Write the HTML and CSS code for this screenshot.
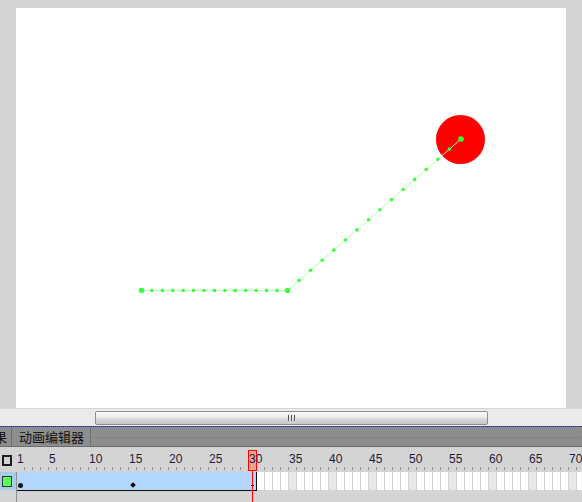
FILE: index.html
```html
<!DOCTYPE html>
<html lang="zh">
<head>
<meta charset="utf-8">
<title>动画编辑器</title>
<link rel="stylesheet" href="styles.css">
</head>
<body>
<div class="app">
  <div class="workspace">
    <div class="stage">
      <svg class="stage-svg" width="550" height="400" viewBox="16 8 550 400" xmlns="http://www.w3.org/2000/svg">
        <circle cx="460.5" cy="139.5" r="24.5" fill="#ff0000"/>
        <polyline points="141.5,290.5 287.5,290.5 461,139" fill="none" stroke="#b3ffb3" stroke-width="1"/>
        <g fill="#3cff3c">
          <circle cx="141.5" cy="290.5" r="2.8"/>
          <circle cx="151.9" cy="290.5" r="1.8"/>
          <circle cx="162.4" cy="290.5" r="1.8"/>
          <circle cx="172.8" cy="290.5" r="1.8"/>
          <circle cx="183.2" cy="290.5" r="1.8"/>
          <circle cx="193.6" cy="290.5" r="1.8"/>
          <circle cx="204.1" cy="290.5" r="1.8"/>
          <circle cx="214.5" cy="290.5" r="1.8"/>
          <circle cx="224.9" cy="290.5" r="1.8"/>
          <circle cx="235.4" cy="290.5" r="1.8"/>
          <circle cx="245.8" cy="290.5" r="1.8"/>
          <circle cx="256.2" cy="290.5" r="1.8"/>
          <circle cx="266.6" cy="290.5" r="1.8"/>
          <circle cx="277.1" cy="290.5" r="1.8"/>
          <circle cx="287.5" cy="290.5" r="2.8"/>
          <circle cx="299.1" cy="280.4" r="1.8"/>
          <circle cx="310.6" cy="270.3" r="1.8"/>
          <circle cx="322.2" cy="260.2" r="1.8"/>
          <circle cx="333.8" cy="250.1" r="1.8"/>
          <circle cx="345.3" cy="240.0" r="1.8"/>
          <circle cx="356.9" cy="229.9" r="1.8"/>
          <circle cx="368.5" cy="219.8" r="1.8"/>
          <circle cx="380.0" cy="209.7" r="1.8"/>
          <circle cx="391.6" cy="199.6" r="1.8"/>
          <circle cx="403.2" cy="189.5" r="1.8"/>
          <circle cx="414.7" cy="179.4" r="1.8"/>
          <circle cx="426.3" cy="169.3" r="1.8"/>
          <circle cx="437.9" cy="159.2" r="1.8"/>
          <circle cx="449.4" cy="149.1" r="1.8"/>
          <circle cx="461" cy="139" r="2.8"/>
        </g>
      </svg>
    </div>
  </div>

  <div class="hscroll">
    <div class="thumb"><span class="grip"><i></i><i></i><i></i></span></div>
  </div>

  <div class="tabbar">
    <div class="tab tab-cut">果</div>
    <div class="tab">动画编辑器</div>
  </div>

  <div class="timeline">
    <div class="tl-header">
      <div class="tl-corner"><span class="outline-box"></span></div>
      <div class="ruler">
        <span class="num first">1</span>
        <span class="num">5</span>
        <span class="num">10</span>
        <span class="num">15</span>
        <span class="num">20</span>
        <span class="num">25</span>
        <span class="num">30</span>
        <span class="num">35</span>
        <span class="num">40</span>
        <span class="num">45</span>
        <span class="num">50</span>
        <span class="num">55</span>
        <span class="num">60</span>
        <span class="num">65</span>
        <span class="num">70</span>
      </div>
    </div>
    <div class="tl-body">
      <div class="left-col">
        <div class="layer-cell"><span class="swatch"></span></div>
      </div>
      <div class="frames-col">
        <div class="frame-row">
          <div class="tween">
            <span class="kf-dot"></span>
            <span class="kf-diamond"></span>
            <span class="kf-plus"></span>
          </div>
          <div class="empty-frames"></div>
        </div>
      </div>
    </div>
    <div class="playhead"></div>
    <div class="playline"></div>
  </div>
</div>
</body>
</html>
```

FILE: styles.css
```css
html, body {
  margin: 0;
  padding: 0;
}

body {
  width: 582px;
  height: 502px;
  overflow: hidden;
  background: #d4d4d4;
  font-family: "Liberation Sans", "Noto Sans CJK SC", sans-serif;
}

.app {
  width: 582px;
  height: 502px;
  display: flex;
  flex-direction: column;
}

/* ---------- stage ---------- */
.workspace {
  height: 409px;
  box-sizing: border-box;
  padding: 8px 0 0 16px;
  flex: none;
}

.stage {
  width: 550px;
  height: 400px;
  background: #ffffff;
}

.stage-svg {
  display: block;
}

/* ---------- horizontal scrollbar ---------- */
.hscroll {
  height: 17px;
  flex: none;
  box-sizing: border-box;
  padding-top: 2px;
  background: #ebebeb;
}

.thumb {
  margin-left: 95px;
  width: 393px;
  height: 14px;
  box-sizing: border-box;
  border: 1px solid #8e8e8e;
  border-radius: 2px;
  background: linear-gradient(#fbfbfb, #ececec 45%, #dadada 55%, #c8c8c8);
  display: flex;
  justify-content: center;
  align-items: center;
}

.grip {
  display: flex;
  gap: 1px;
  height: 6px;
}

.grip i {
  display: block;
  width: 2px;
  height: 6px;
  background: linear-gradient(to right, #555 1px, #e6e6e6 1px);
}

/* ---------- panel tab bar ---------- */
.tabbar {
  height: 21px;
  flex: none;
  box-sizing: border-box;
  padding-top: 1px;
  border-bottom: 1px solid #6c6c6c;
  display: flex;
  overflow: hidden;
  background:
    repeating-linear-gradient(90deg, #5a5ab8 0 1px, #333 1px 2px) left top / 100% 1px no-repeat,
    repeating-linear-gradient(90deg, #7a7a7a 0 1px, transparent 1px 2px) left 0 top 11px / 100% 1px no-repeat,
    #8d8d8d;
}

.tab {
  flex: none;
  height: 19px;
  box-sizing: border-box;
  padding: 1px 6px 0 7px;
  font-family: "Noto Sans CJK SC", "Liberation Sans", sans-serif;
  font-size: 13px;
  line-height: 17px;
  color: #111;
  background: #8e8e8e;
  border-right: 1px solid #6e6e6e;
}

.tab-cut {
  margin-left: -6px;
  padding: 1px 4px 0 0;
}

/* ---------- timeline ---------- */
.timeline {
  position: relative;
  flex: 1;
  overflow: hidden;
}

.tl-header {
  display: flex;
  height: 25px;
}

.tl-corner {
  width: 17px;
  flex: none;
  box-sizing: border-box;
  padding: 8px 0 0 2px;
}

.outline-box {
  display: block;
  width: 10px;
  height: 11px;
  box-sizing: border-box;
  border: 2px solid #1c1c1c;
}

.ruler {
  flex: 1;
  display: flex;
  box-sizing: border-box;
  padding-top: 5px;
  overflow: hidden;
  background: repeating-linear-gradient(to right, transparent 0 7px, #8c8c8c 7px 8px) left 0 bottom 2px / 100% 3px no-repeat;
}

.num {
  position: relative;
  z-index: 1;
  flex: none;
  width: 40px;
  font-size: 12px;
  line-height: 14px;
  color: #1e1e3a;
}

.num.first {
  width: 32px;
}

.tl-body {
  display: flex;
  height: 30px;
}

.left-col {
  width: 16px;
  flex: none;
  border-right: 1px solid #8f8f8f;
}

.layer-cell {
  height: 18px;
  box-sizing: border-box;
  padding: 4px 0 0 2px;
  background: #a9cbeb;
}

.swatch {
  display: block;
  width: 10px;
  height: 11px;
  box-sizing: border-box;
  border: 1px solid #333;
  background: #55ff55;
}

.frames-col {
  flex: 1;
}

.frame-row {
  display: flex;
  height: 19px;
}

.tween {
  flex: none;
  width: 240px;
  height: 19px;
  box-sizing: border-box;
  padding-bottom: 2px;
  background: #b3d7ff;
  border-right: 1px solid #111;
  border-bottom: 1px solid #111;
  display: flex;
  align-items: flex-end;
}

.kf-dot {
  flex: none;
  width: 5px;
  height: 5px;
  margin-left: 1px;
  border-radius: 50%;
  background: #111;
}

.kf-diamond {
  flex: none;
  width: 4px;
  height: 4px;
  margin-left: 108px;
  margin-bottom: 1px;
  background: #111;
  transform: rotate(45deg);
}

.kf-plus {
  flex: none;
  width: 3px;
  height: 3px;
  margin-left: 116px;
  margin-bottom: 1px;
  background:
    linear-gradient(#111, #111) center / 3px 1px no-repeat,
    linear-gradient(#111, #111) center / 1px 3px no-repeat;
}

.empty-frames {
  flex: 1;
  height: 18px;
  background:
    repeating-linear-gradient(to right, transparent 0 7px, #d2d2d2 7px 8px),
    repeating-linear-gradient(to right, #ffffff 0 32px, #e7e7e7 32px 40px);
}

/* playhead overlay */
.playhead {
  position: absolute;
  left: 248px;
  top: 3px;
  width: 9px;
  height: 21px;
  box-sizing: border-box;
  border: 1px solid #ff0000;
  background: #eea68d;
  z-index: 0;
}

.playline {
  position: absolute;
  left: 252px;
  top: 24px;
  width: 1px;
  height: 40px;
  background: #ff0000;
  z-index: 2;
}
```
